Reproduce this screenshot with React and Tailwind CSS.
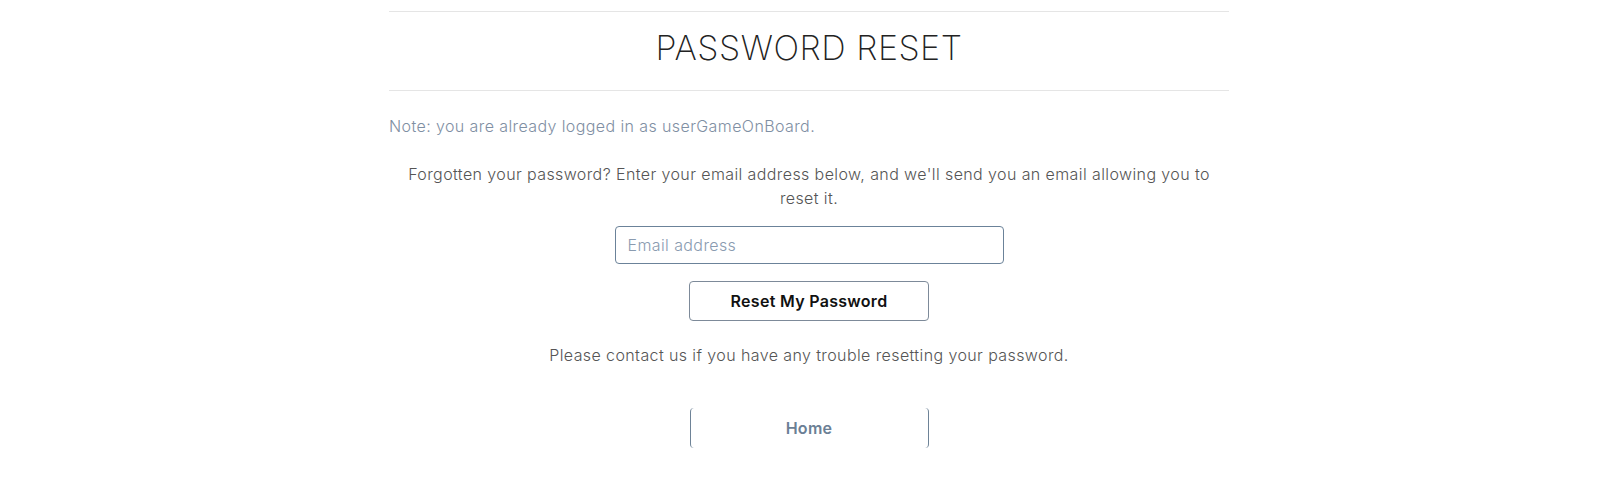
import React, { useState } from 'react';

function App() {
  const [email, setEmail] = useState('');

  return (
    <div className="min-h-screen bg-white pr-[4px] font-['Inter','Noto_Sans',sans-serif]">
      <div className="mx-auto w-[840px] pt-[11px]">
        <div className="border-t border-b border-[#e5e5e5] h-[80px] pb-[7px] flex items-center justify-center">
          <h1 className="text-[34px] font-extralight tracking-[0.5px] text-[#222] uppercase">Password Reset</h1>
        </div>

        <p className="mt-[23px] text-[16px] font-light tracking-[0.4px] text-[#7f8fa3]">
          Note: you are already logged in as userGameOnBoard.
        </p>

        <form className="mt-[24px] flex flex-col items-center" onSubmit={(e) => e.preventDefault()}>
          <p className="text-center text-[16px] leading-[24px] font-light tracking-[0.4px] text-[#555] px-[12px]">
            Forgotten your password? Enter your email address below, and we'll send you an email allowing you to reset it.
          </p>
          <input
            type="email"
            name="email"
            value={email}
            onChange={(e) => setEmail(e.target.value)}
            placeholder="Email address"
            className="mt-[16px] w-[389px] h-[38px] px-[12px] rounded-[4px] border border-[#6b8299] text-[16px] font-light tracking-[0.4px] placeholder-[#8a9bb0] focus:outline-none"
          />
          <button
            type="submit"
            className="mt-[17px] w-[240px] h-[40px] rounded-[4px] border border-[#7d8a99] text-[16px] font-semibold tracking-[0.3px] text-[#111]"
          >
            Reset My Password
          </button>
        </form>

        <p className="mt-[22px] text-center text-[16px] font-light tracking-[0.4px] text-[#555]">
          Please contact us if you have any trouble resetting your password.
        </p>

        <div className="mt-[41px] flex justify-center">
          <a href="#" className="w-[239px] h-[40px] flex items-center justify-center rounded-[4px] border-x border-[#6e8397] text-[16px] font-semibold tracking-[0.3px] text-[#6b7f95]">
            Home
          </a>
        </div>
      </div>
    </div>
  );
}

export default App;
